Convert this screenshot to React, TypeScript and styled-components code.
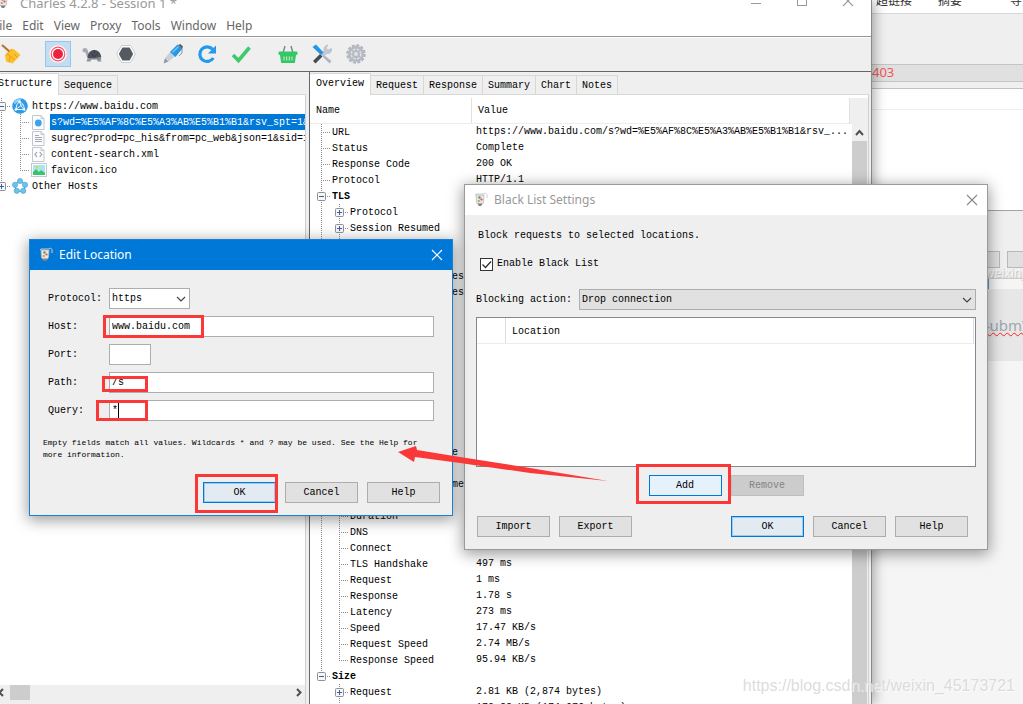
import React from "react";
import styled, { createGlobalStyle, css } from "styled-components";

const mono = `"Liberation Mono", "Noto Sans CJK SC", monospace`;
const ui = `"Noto Sans", "Noto Sans CJK SC", sans-serif`;

const GlobalStyle = createGlobalStyle`
  * { box-sizing: border-box; }
  body { margin: 0; background: #f5f5f5; font: 10px/16px ${mono}; color: #000; }
  button, input, select { font: inherit; color: inherit; margin: 0; border-radius: 0; }
  ul { list-style: none; margin: 0; padding: 0; }
`;

const Desktop = styled.div`
  position: relative;
  display: flex;
  height: 100vh;
  overflow: hidden;
`;

/* ---------- Charles main window ---------- */

const MainWindow = styled.main`
  position: relative;
  z-index: 1;
  flex: 1;
  min-width: 0;
  display: flex;
  flex-direction: column;
  background: #efefef;
  border-right: 1px solid #8a8a8a;
  box-shadow: 2px 0 12px rgba(0, 0, 0, 0.35);
`;

const TitleBar = styled.header`
  height: 14px;
  display: flex;
  align-items: flex-end;
  gap: 8px;
  background: #fff;
  color: #999;
  font: 13px/22px ${ui};
  overflow: hidden;
  > svg { flex: none; margin: 0 0 4px -4px; }
`;

const TitleText = styled.span`
  flex: 1;
`;

const WindowButtons = styled.div`
  display: flex;
  gap: 34px;
  padding: 0 17px 7px 0;
  svg { display: block; }
`;

const MenuBar = styled.nav`
  height: 23px;
  display: flex;
  gap: 10px;
  background: #fff;
  border-bottom: 1px solid #979797;
`;

const MenuItem = styled.button`
  padding: 2px 0 0;
  border: 0;
  background: none;
  color: #666;
  font: 12px/20px ${ui};
  &:first-child { margin-left: -7px; }
`;

const Toolbar = styled.div`
  height: 35px;
  display: flex;
  align-items: center;
  gap: 21px;
  padding-bottom: 2px;
  border-top: 1px solid #fff;
  border-bottom: 1px solid #666;
`;

const ToolGroup = styled.div`
  display: flex;
  gap: 8px;
  &:first-child { margin-left: -2px; }
`;

const ToolButton = styled.button<{ $active?: boolean }>`
  width: 26px;
  height: 26px;
  padding: 0;
  display: grid;
  place-items: center;
  border: 1px solid ${(p) => (p.$active ? "#90c8f0" : "transparent")};
  background: ${(p) => (p.$active ? "#c4dcf0" : "transparent")};
  svg { display: block; }
`;

const Panes = styled.div`
  flex: 1;
  min-height: 0;
  display: flex;
`;

const StructurePane = styled.section`
  width: 310px;
  flex: none;
  display: flex;
  flex-direction: column;
  padding: 1px 3px 0 0;
  border-right: 1px solid #666;
`;

const DetailPane = styled.section`
  flex: 1;
  min-width: 0;
  display: flex;
  flex-direction: column;
  padding: 1px 2px 0 0;
`;

const TabList = styled.div`
  display: flex;
  align-items: flex-end;
  height: 22px;
  border-bottom: 1px solid #d8d8d8;
`;

const Tab = styled.button<{ $selected?: boolean }>`
  height: 19px;
  padding: 0 5px;
  border: 1px solid #d8d8d8;
  border-width: 1px 1px 0 0;
  background: #efefef;
  line-height: 20px;
  ${(p) =>
    p.$selected &&
    css`
      height: 22px;
      padding: 0 6px 2px;
      margin-bottom: -1px;
      background: #fff;
    `}
`;

const CutTab = styled(Tab)`
  margin-left: -2px;
  padding-left: 0;
`;

const TreeArea = styled.div`
  flex: 1;
  min-height: 0;
  display: flex;
  flex-direction: column;
  background: #fff;
  border-right: 1px solid #d0d0d0;
`;

const HostTree = styled.ul`
  flex: 1;
  padding-top: 3px;
  overflow: hidden;
`;

const HostRow = styled.li`
  display: flex;
  height: 16px;
  margin-left: -4px;
  white-space: nowrap;
  svg { flex: none; }
`;

const HostLabel = styled.span<{ $selected?: boolean }>`
  flex: 1;
  padding: 0 1px;
  margin-left: 3px;
  overflow: hidden;
  line-height: 17px;
  ${(p) => p.$selected && "background: #0078d7; color: #fff;"}
`;

const HScroll = styled.div`
  height: 19px;
  display: flex;
  align-items: flex-start;
  background: #efefef;
  svg { margin-top: 3px; }
`;

const HThumb = styled.div`
  width: 20px;
  height: 15px;
  margin: 0 auto 0 6px;
  background: #cdcdcd;
`;

const dots = (dir: string) =>
  `repeating-linear-gradient(${dir}, #8c8c8c 0 1px, transparent 1px 2px)`;

/* One indentation step of a tree, drawn with dotted connectors */
const Guide = styled.span<{ $w?: number; $line?: "full" | "half" | "none"; $branch?: boolean }>`
  flex: none;
  width: ${(p) => p.$w ?? 16}px;
  height: 16px;
  display: block;
  padding: 4px 0 0 1px;
  background-repeat: no-repeat;
  background-image: ${dots("to bottom")}, ${dots("to right")};
  background-position: 5px 0, 5px 8px;
  background-size:
    ${(p) => (!p.$line || p.$line === "none" ? "0 0" : p.$line === "half" ? "1px 9px" : "1px 16px")},
    ${(p) => (p.$branch ? "calc(100% - 6px) 1px" : "0 0")};
  svg { display: block; }
`;

const DetailBody = styled.div`
  flex: 1;
  min-height: 0;
  display: flex;
  padding-top: 3px;
  background: #fff;
  border-right: 1px solid #d0d0d0;
  overflow: hidden;
`;

const DetailTable = styled.table`
  flex: 1;
  display: block;
  border-collapse: collapse;
  thead, tbody { display: block; }
  tr { display: flex; }
  thead tr { height: 26px; border-bottom: 1px solid #ececec; }
  th { font-weight: 400; text-align: left; padding: 0 0 0 6px; line-height: 26px; }
  td { padding: 0; height: 16px; white-space: nowrap; }
`;

const NameHead = styled.th`
  width: 162px;
  border-right: 1px solid #e0e0e0;
`;

const NameCell = styled.td<{ $bold?: boolean }>`
  width: 166px;
  flex: none;
  display: flex;
  line-height: 17px;
  font-weight: ${(p) => (p.$bold ? 700 : 400)};
  &::before { content: ""; width: 6px; flex: none; }
`;

const ValueCell = styled.td`
  line-height: 15px;
`;

const VScroll = styled.div`
  width: 19px;
  flex: none;
  display: flex;
  flex-direction: column;
  align-items: flex-end;
`;

const ScrollCorner = styled.div`
  width: 19px;
  height: 26px;
  background: #efefef;
  border-left: 1px solid #e0e0e0;
`;

const VTrack = styled.div`
  flex: 1;
  width: 16px;
  display: flex;
  flex-direction: column;
  background: #efefef;
  padding-right: 1px;
  svg { display: block; margin: 4px 3px; }
`;

const VThumb = styled.div`
  flex: 1;
  background: #cdcdcd;
`;

/* ---------- Window behind, on the right ---------- */

const BackWindow = styled.aside`
  width: 151px;
  flex: none;
  display: flex;
  flex-direction: column;
  background: #f5f5f5;
  overflow: hidden;
`;

const BackTabs = styled.div`
  height: 14px;
  flex: none;
  display: flex;
  align-items: flex-end;
  gap: 26px;
  padding-left: 4px;
  background: #fff;
  border-bottom: 1px solid #d8d8d8;
  font: 12px/18px "Noto Sans CJK SC", sans-serif;
  color: #333;
  white-space: nowrap;
  span { margin-bottom: 4px; }
  span:last-child { margin-left: 22px; }
`;

const BackGap = styled.div<{ $h: number; $bg: string; $line?: string }>`
  height: ${(p) => p.$h}px;
  flex: none;
  background: ${(p) => p.$bg};
  border-bottom: 1px solid ${(p) => p.$line ?? p.$bg};
`;

const CodeBar = styled.div`
  height: 18px;
  flex: none;
  background: #e0e0e0;
  border: 1px solid #c4c4c4;
  border-width: 1px 0;
  color: #f25555;
  font: 13px/14px ${ui};
`;

const BackForm = styled.div`
  height: 68px;
  flex: none;
  display: flex;
  flex-direction: column;
  justify-content: flex-end;
  background: #efefef;
  border-bottom: 1px solid #ccc;
  color: #f4f4f4;
  font: 13px/10px "Liberation Sans", sans-serif;
  text-shadow: 1px 1px 1px #bbb;
  padding-left: 113px;
`;

const BackButtons = styled.div`
  display: flex;
  gap: 7px;
  i { width: 15px; height: 17px; border: 1px solid #b8b8b8; background: #e0e0e0; }
  i:last-child { flex: 1; border-right: 0; }
`;

const BackStrip = styled.div`
  height: 10px;
  flex: none;
  margin-left: 115px;
  border-left: 2px solid #4f9be0;
`;

const Captcha = styled.div`
  height: 72px;
  flex: none;
  padding: 24px 0 0 109px;
  background: #e7e7e7;
  color: #a0a6b0;
  font: 15px/24px ${ui};
  text-decoration: underline wavy #f22 1px;
  white-space: nowrap;
`;

/* ---------- Dialogs ---------- */

const Dialog = styled.section<{ $x: number; $y: number; $w: number; $border: string }>`
  position: absolute;
  z-index: 2;
  left: ${(p) => p.$x}px;
  top: ${(p) => p.$y}px;
  width: ${(p) => p.$w}px;
  background: #efefef;
  border: 1px solid ${(p) => p.$border};
  box-shadow: 0 3px 14px 1px rgba(0, 0, 0, 0.4);
`;

const DialogTitle = styled.header<{ $active?: boolean }>`
  height: 30px;
  display: flex;
  align-items: center;
  gap: 5px;
  padding: 0 9px 0 8px;
  font: 12px/20px ${ui};
  background: ${(p) => (p.$active ? "#0078d7" : "#fff")};
  color: ${(p) => (p.$active ? "#fff" : "#999")};
  span { flex: 1; }
`;

const CloseButton = styled.button`
  padding: 0;
  border: 0;
  background: none;
  svg { display: block; }
`;

const PushButton = styled.button<{ $look?: "default" | "hover" }>`
  width: 73px;
  height: 21px;
  padding: 0;
  background: #e1e1e1;
  border: 1px solid #adadad;
  line-height: 19px;
  ${(p) => p.$look === "default" && "background: #e2eaf2; border-color: #0078d7; box-shadow: inset 0 0 0 1px #9ccbf0;"}
  ${(p) => p.$look === "hover" && "background: #e5f1fb; border-color: #0078d7;"}
  &:disabled { background: #ccc; border-color: #bfbfbf; color: #838383; }
`;

const ButtonRow = styled.div<{ $justify?: string }>`
  display: flex;
  gap: 9px;
  justify-content: ${(p) => p.$justify ?? "flex-start"};
`;

const FooterRow = styled(ButtonRow)`
  padding: 20px 8px 0 1px;
`;

const Spacer = styled.div`
  flex: 1;
`;

const LocationForm = styled.form`
  padding: 18px 12px 12px 13px;
`;

const Fields = styled.div`
  display: grid;
  grid-template-columns: 57px 1fr;
  row-gap: 7px;
  padding: 0 6px 0 5px;
  label { line-height: 21px; }
`;

const TextBox = styled.input`
  width: ${(p) => (p.size === 5 ? "42px" : "100%")};
  height: 21px;
  padding: 0 2px;
  border: 1px solid #abadb3;
  background: #fff;
  display: block;
  outline: none;
`;

const FieldBox = styled.div`
  position: relative;
  margin-left: 4px;
`;

const Caret = styled.i`
  position: absolute;
  left: 9px;
  top: 3px;
  width: 1px;
  height: 15px;
  background: #000;
`;

const SelectBox = styled.div<{ $w?: string; $gray?: boolean }>`
  position: relative;
  width: ${(p) => p.$w ?? "auto"};
  flex: 1;
  select {
    appearance: none;
    width: 100%;
    height: 21px;
    padding: 0 2px;
    display: block;
    border: 1px solid #adadad;
    background: ${(p) => (p.$gray ? "#e1e1e1" : "#fff")};
    outline: none;
  }
  svg { position: absolute; right: 4px; top: 7px; pointer-events: none; }
`;

const Hint = styled.p`
  margin: 16px 0 21px;
  font-size: 8px;
  line-height: 12px;
`;

const OptionForm = styled.form`
  padding: 13px 11px 12px;
  p { margin: 0 0 12px 2px; }
`;

const CheckRow = styled.label`
  display: flex;
  align-items: center;
  gap: 4px;
  height: 16px;
  margin: 0 0 17px 4px;
  input {
    appearance: none;
    width: 13px;
    height: 13px;
    border: 1px solid #333;
    background: #fff;
  }
  svg { position: absolute; pointer-events: none; margin-left: 1px; }
`;

const ActionRow = styled.div`
  display: flex;
  align-items: center;
  gap: 7px;
  label { line-height: 21px; }
`;

const LocationTable = styled.table`
  width: 100%;
  height: 150px;
  display: block;
  margin: 7px 0 8px;
  background: #fff;
  border: 1px solid #828790;
  border-collapse: collapse;
  thead { display: block; }
  tr { display: flex; height: 26px; border-bottom: 1px solid #ececec; padding-right: 1px; }
  th { padding: 0; font-weight: 400; line-height: 28px; text-align: left; border-right: 1px solid #dcdcdc; }
  th:first-child { width: 29px; }
  th:last-child { flex: 1; padding-left: 6px; }
`;

/* ---------- Markup over the windows ---------- */

const Mark = styled.div<{ $x: number; $y: number; $w: number; $h: number }>`
  position: absolute;
  z-index: 3;
  left: ${(p) => p.$x}px;
  top: ${(p) => p.$y}px;
  width: ${(p) => p.$w}px;
  height: ${(p) => p.$h}px;
  border: 3px solid #fb3838;
  pointer-events: none;
`;

const Arrow = styled.svg`
  position: absolute;
  z-index: 3;
  left: 396px;
  top: 440px;
  pointer-events: none;
`;

const Watermark = styled.div`
  position: absolute;
  z-index: 3;
  right: 8px;
  bottom: 8px;
  color: rgba(216, 216, 216, 0.9);
  font: 16px/20px "Liberation Sans", sans-serif;
  text-shadow: 1px 1px 0 rgba(255, 255, 255, 0.7);
`;

/* ---------- Icons ---------- */

const JugIcon = () => (
  <svg width="16" height="16" viewBox="0 0 16 16">
    <path d="M2 3l1-1h8l1.500-1L14 2.500V6" fill="none" stroke="#cfcfcf" strokeWidth="1" />
    <path d="M3 3h8l-.5 7.500L8.500 13h-3L3.500 10.500z" fill="#e6e6e2" stroke="#b4b4b0" strokeWidth=".7" />
    <path d="M4.500 11.500h5L8 14H6z" fill="#808080" />
    <circle cx="6.500" cy="5.500" r="1.200" fill="#4fa05a" />
    <circle cx="8.500" cy="7.500" r="1.100" fill="#d8506a" />
    <circle cx="5.800" cy="9" r="1.100" fill="#e08a5a" />
  </svg>
);

const CloseIcon = ({ color }: { color: string }) => (
  <svg width="12" height="12" viewBox="0 0 12 12">
    <path d="M1 1l10 10M11 1L1 11" stroke={color} strokeWidth="1.100" />
  </svg>
);

const Chevron = () => (
  <svg width="10" height="8" viewBox="0 0 10 8">
    <path d="M1 2l4 4 4-4" fill="none" stroke="#444" strokeWidth="1.200" />
  </svg>
);

const Toggle = ({ open }: { open: boolean }) => (
  <svg width="9" height="9" viewBox="0 0 9 9">
    <rect x=".5" y=".5" width="8" height="8" rx="1" fill="#f6f6f6" stroke="#8f8f8f" />
    <path d={open ? "M2 4.500h5" : "M2 4.500h5M4.500 2v5"} stroke="#3a5fb0" />
  </svg>
);

const ScrollArrow = ({ d }: { d: string }) => (
  <svg width="9" height="9" viewBox="0 0 9 9">
    <path d={d} fill="none" stroke="#505050" strokeWidth="2" />
  </svg>
);

const GlobeIcon = () => (
  <svg width="16" height="16" viewBox="0 0 16 16">
    <circle cx="8" cy="8" r="7.800" fill="#2f9be6" />
    <path d="M1.500 5A7.500 7.500 0 0 1 10 .8L6 4 3 6z" fill="#8fd0f7" />
    <path d="M7.500 3.500Q4 6 3.800 11.500h8.400Q12.500 6 7.500 3.500M7.500 3.500Q8 8 12.200 11.500M3.800 11.500L11 6" fill="none" stroke="#e6f5ff" strokeWidth="1" />
    <g fill="#fff"><circle cx="7.500" cy="3.500" r="1.200" /><circle cx="3.800" cy="11.500" r="1.200" /><circle cx="12.200" cy="11.500" r="1.200" /></g>
  </svg>
);

const HostsIcon = () => (
  <svg width="16" height="16" viewBox="0 0 16 16">
    <circle cx="8" cy="8.500" r="4.800" fill="none" stroke="#8a98a4" strokeWidth="1.200" />
    <g fill="#6cc4ee" stroke="#3d9fd2" strokeWidth=".6">
      <circle cx="8" cy="3" r="2.600" /><circle cx="13" cy="6.800" r="2.600" />
      <circle cx="11.200" cy="12.800" r="2.600" /><circle cx="4.800" cy="12.800" r="2.600" />
      <circle cx="3" cy="6.800" r="2.600" />
    </g>
  </svg>
);

const FileIcon = ({ kind }: { kind: string }) => (
  <svg width="16" height="16" viewBox="0 0 16 16">
    {kind === "image" ? (
      <>
        <rect x=".5" y="1.500" width="15" height="13" fill="#fff" stroke="#c2c8d0" />
        <rect x="2" y="3" width="12" height="10" fill="#a6e6f0" />
        <path d="M2 13V10l3-3 3 3 2-2 4 3v2z" fill="#3cc267" />
        <circle cx="6" cy="5" r="1.300" fill="#ffc73a" />
      </>
    ) : (
      <>
        <path d="M1.500 1.500h8.500l3 3v11h-11.500z" fill="#fcfcfe" stroke="#c2c6d2" />
        <path d="M10 1.500v3h3" fill="none" stroke="#c2c6d2" />
        {kind === "dot" && <circle cx="7.300" cy="9" r="3.400" fill="#3ba4e8" />}
        {kind === "text" && <path d="M4 5.500h4M4 7.500h7M4 9.500h7M4 11.500h7" stroke="#a4a8b4" />}
        {kind === "code" && <path d="M6 6L4 8.500l2 2.500M8.700 6l2 2.500-2 2.500" fill="none" stroke="#9a9faa" strokeWidth="1.200" />}
      </>
    )}
  </svg>
);

const toolIcons: Record<string, React.ReactNode> = {
  Clear: (
    <>
      <path d="M1 1l8 7" stroke="#b5752a" strokeWidth="2.200" />
      <path d="M11 4.500l3 1.500 5.500 5-8 8.500L5 17.500 4 11.500z" fill="#fcc02e" />
      <path d="M5.500 9l8 7M10.500 5l-6 6.500M9 12l-1 6M13 10l3.500 3.500" stroke="#e39a16" strokeWidth=".9" />
    </>
  ),
  Record: (
    <>
      <circle cx="10" cy="10" r="9" fill="#fff" stroke="#e4dce0" />
      <circle cx="10" cy="10" r="6.800" fill="#fff" stroke="#ee5570" strokeWidth="1.200" />
      <circle cx="10" cy="10" r="5" fill="#f0203f" />
    </>
  ),
  Throttle: (
    <>
      <path d="M.5 6.500Q.5 4 3 4q2.500 0 2.800 2.500L7 10l2 1v3.500L5 13 3.500 8.500 1 8z" fill="#a3a8b2" />
      <path d="M5.500 14.500c0-6 3.500-8.500 7-8.500s6.500 3 6.800 7.500z" fill="#4c5058" />
      <path d="M7 14h12v1.500H7z" fill="#7d828b" />
      <path d="M5.500 14.500h4l-1 3h-4zM15 15h3.500l1 2.500h-4z" fill="#8f949d" />
      <path d="M9 9l3.500 4L16 9M12.500 6v3.500" fill="none" stroke="#33363c" strokeWidth=".8" />
    </>
  ),
  Breakpoints: (
    <>
      <path d="M5.500 1.500h9L19.400 10l-4.900 8.500h-9L.6 10z" fill="#fff" stroke="#c8ccd2" />
      <path d="M6.400 3.600h7.200L17.200 10l-3.600 6.400H6.400L2.800 10z" fill="#555a62" />
    </>
  ),
  Compose: (
    <>
      <path d="M.5 19.500L2 14l3.500 3.500z" fill="#8f97a4" />
      <path d="M2 14l5.500-6.500 5 4.500-7 5.500z" fill="#c9cfda" />
      <path d="M7 8l7.500-7.500 4.500 4.500-6.500 8z" fill="#2299e4" />
      <path d="M9.500 8.500l6-6" stroke="#7cc8f5" strokeWidth="1.200" />
      <path d="M15 1l2.500-1 2.500 2.500-1 3z" fill="#5d6572" />
      <path d="M19 5v4l-3 3" fill="none" stroke="#8a929f" strokeWidth="1" />
    </>
  ),
  Repeat: (
    <>
      <path d="M15.500 5.200A7.300 7.300 0 1 0 16.300 14" fill="none" stroke="#2299ec" strokeWidth="3.200" />
      <path d="M19 1.500V9.500h-8z" fill="#2299ec" />
    </>
  ),
  Validate: <path d="M2 11l5.500 5.500L18.500 3.500" fill="none" stroke="#3fca6d" strokeWidth="3.600" />,
  Purchase: (
    <>
      <path d="M5 9L7 2M15 9l-2-7" stroke="#7b838d" strokeWidth="1.400" />
      <rect x=".5" y="7.500" width="19" height="3.500" rx="1" fill="#37c665" />
      <path d="M2 11h16l-1.200 8H3.200z" fill="#37c665" />
      <path d="M6 12.500v4M8.700 12.500v4M11.300 12.500v4M14 12.500v4" stroke="#c5f3d2" strokeWidth="1" />
    </>
  ),
  Tools: (
    <>
      <path d="M16 1l-2 3 2 2 3.500-1.500c.5 4-2 5.500-5 5l-3 3-2.500-2.500 3-3C11.500 3.500 13.500 1 16 1z" fill="#c3c9d2" stroke="#a5acb8" strokeWidth=".5" />
      <path d="M1 17l7-7 2.500 2.500-7 7z" fill="#454b55" />
      <path d="M.5 3L4 .5l7.500 8-2.500 2.500z" fill="#2196e8" />
      <path d="M12 11l7.500 6-2 2.500-7-7z" fill="#aeb6c2" />
    </>
  ),
  Settings: (
    <>
      <circle cx="10" cy="10" r="8.700" fill="none" stroke="#adb3bd" strokeWidth="2" strokeDasharray="3 1.555" />
      <circle cx="10" cy="10" r="8" fill="#b4b9c2" />
      <circle cx="10" cy="10" r="4.800" fill="none" stroke="#dfe2e7" strokeWidth="1.600" strokeDasharray="2.500 1.270" />
      <circle cx="10" cy="10" r="2" fill="#dfe2e7" />
    </>
  ),
};

const toolGroups = [
  ["Clear"],
  ["Record", "Throttle", "Breakpoints"],
  ["Compose", "Repeat", "Validate"],
  ["Purchase", "Tools", "Settings"],
];

/* ---------- Data ---------- */

type Item = { name: string; value?: string; level: 0 | 1; open?: boolean; last?: boolean };

const items: Item[] = [
  { name: "URL", value: "https://www.baidu.com/s?wd=%E5%AF%8C%E5%A3%AB%E5%B1%B1&rsv_...", level: 0 },
  { name: "Status", value: "Complete", level: 0 },
  { name: "Response Code", value: "200 OK", level: 0 },
  { name: "Protocol", value: "HTTP/1.1", level: 0 },
  { name: "TLS", level: 0, open: true },
  { name: "Protocol", level: 1, open: false },
  { name: "Session Resumed", level: 1, open: false },
  { name: "Cipher Suite", level: 1, open: false },
  { name: "ALPN", level: 1, open: false },
  { name: "Client Certificates", level: 1 },
  { name: "Server Certificates", level: 1, open: false },
  { name: "Extensions", level: 1, open: false, last: true },
  { name: "Method", value: "GET", level: 0 },
  { name: "Kept Alive", value: "No", level: 0 },
  { name: "Content-Type", level: 0 },
  { name: "Client Address", level: 0 },
  { name: "Remote Address", level: 0 },
  { name: "Tags", level: 0 },
  { name: "Connection", level: 0, open: false },
  { name: "Timing", level: 0, open: true },
  { name: "Request Start Time", level: 1 },
  { name: "Request End Time", level: 1 },
  { name: "Response Start Time", level: 1 },
  { name: "Response End Time", level: 1 },
  { name: "Duration", level: 1 },
  { name: "DNS", level: 1 },
  { name: "Connect", value: "3.99 s", level: 1 },
  { name: "TLS Handshake", value: "497 ms", level: 1 },
  { name: "Request", value: "1 ms", level: 1 },
  { name: "Response", value: "1.78 s", level: 1 },
  { name: "Latency", value: "273 ms", level: 1 },
  { name: "Speed", value: "17.47 KB/s", level: 1 },
  { name: "Request Speed", value: "2.74 MB/s", level: 1 },
  { name: "Response Speed", value: "95.94 KB/s", level: 1, last: true },
  { name: "Size", level: 0, open: true, last: true },
  { name: "Request", value: "2.81 KB (2,874 bytes)", level: 1, open: false },
  { name: "Response", value: "170.22 KB (174,076 bytes)", level: 1, open: false },
];

const files = [
  { kind: "dot", name: "s?wd=%E5%AF%8C%E5%A3%AB%E5%B1%B1&rsv_spt=1&rsv_iqid=", selected: true },
  { kind: "text", name: "sugrec?prod=pc_his&from=pc_web&json=1&sid=1428" },
  { kind: "code", name: "content-search.xml" },
  { kind: "image", name: "favicon.ico" },
];

export default function App() {
  return (
    <Desktop>
      <GlobalStyle />
      <MainWindow>
        <TitleBar>
          <JugIcon />
          <TitleText>Charles 4.2.8 - Session 1 *</TitleText>
          <WindowButtons>
            <svg width="12" height="12"><path d="M1 8.500h10" stroke="#999" /></svg>
            <svg width="12" height="12"><rect x="1.500" y="1.500" width="9" height="9" fill="none" stroke="#999" /></svg>
            <CloseIcon color="#999" />
          </WindowButtons>
        </TitleBar>
        <MenuBar>
          {["File", "Edit", "View", "Proxy", "Tools", "Window", "Help"].map((m) => (
            <MenuItem key={m}>{m}</MenuItem>
          ))}
        </MenuBar>
        <Toolbar>
          {toolGroups.map((group) => (
            <ToolGroup key={group[0]}>
              {group.map((name) => (
                <ToolButton key={name} aria-label={name} $active={name === "Record"}>
                  <svg width="20" height="20" viewBox="0 0 20 20">{toolIcons[name]}</svg>
                </ToolButton>
              ))}
            </ToolGroup>
          ))}
        </Toolbar>
        <Panes>
          <StructurePane>
            <TabList>
              <CutTab $selected>Structure</CutTab>
              <Tab>Sequence</Tab>
            </TabList>
            <TreeArea>
              <HostTree>
                <HostRow>
                  <Guide $line="full" $branch><Toggle open /></Guide>
                  <GlobeIcon />
                  <HostLabel>https://www.baidu.com</HostLabel>
                </HostRow>
                {files.map((f, i) => (
                  <HostRow key={f.name}>
                    <Guide $w={19} $line="full" />
                    <Guide $line={i === files.length - 1 ? "half" : "full"} $branch />
                    <FileIcon kind={f.kind} />
                    <HostLabel $selected={f.selected}>{f.name}</HostLabel>
                  </HostRow>
                ))}
                <HostRow>
                  <Guide $line="half" $branch><Toggle open={false} /></Guide>
                  <HostsIcon />
                  <HostLabel>Other Hosts</HostLabel>
                </HostRow>
              </HostTree>
              <HScroll>
                <svg width="4" height="9" viewBox="5 0 4 9"><path d="M8 1L4.500 4.500 8 8" fill="none" stroke="#505050" strokeWidth="2" /></svg>
                <HThumb />
                <ScrollArrow d="M1 1l3.500 3.500L1 8" />
              </HScroll>
            </TreeArea>
          </StructurePane>
          <DetailPane>
            <TabList>
              {["Overview", "Request", "Response", "Summary", "Chart", "Notes"].map((t, i) => (
                <Tab key={t} $selected={i === 0}>{t}</Tab>
              ))}
            </TabList>
            <DetailBody>
              <DetailTable>
                <thead>
                  <tr>
                    <NameHead>Name</NameHead>
                    <th>Value</th>
                  </tr>
                </thead>
                <tbody>
                  {items.map((it, i) => {
                    const mark = it.open === undefined ? null : <Toggle open={it.open} />;
                    return (
                      <tr key={i}>
                        <NameCell $bold={it.open === true}>
                          {it.level === 1 && <Guide $w={18} $line={i > 34 ? "none" : "full"} />}
                          <Guide $line={it.last ? "half" : "full"} $branch>{mark}</Guide>
                          {it.name}
                        </NameCell>
                        <ValueCell>{it.value}</ValueCell>
                      </tr>
                    );
                  })}
                </tbody>
              </DetailTable>
              <VScroll>
                <ScrollCorner />
                <VTrack>
                  <ScrollArrow d="M1 7l3.500-4L8 7" />
                  <VThumb />
                </VTrack>
              </VScroll>
            </DetailBody>
          </DetailPane>
        </Panes>
      </MainWindow>

      <BackWindow>
        <BackTabs><span>超链接</span><span>摘要</span><span>导入</span></BackTabs>
        <BackGap $h={50} $bg="#efefef" />
        <CodeBar>403</CodeBar>
        <BackGap $h={7} $bg="#efefef" $line="#c0c0c8" />
        <BackGap $h={21} $bg="#fff" $line="#efefef" />
        <BackGap $h={101} $bg="#fff" $line="#a0a4aa" />
        <BackForm>
          <BackButtons><i /><i /></BackButtons>
          weixin_45
        </BackForm>
        <BackStrip />
        <Captcha>4ubmV</Captcha>
      </BackWindow>

      <Dialog $x={464} $y={184} $w={524} $border="#9a9a9a" aria-label="Black List Settings">
        <DialogTitle>
          <JugIcon />
          <span>Black List Settings</span>
          <CloseButton aria-label="Close"><CloseIcon color="#888" /></CloseButton>
        </DialogTitle>
        <OptionForm onSubmit={(e) => e.preventDefault()}>
          <p>Block requests to selected locations.</p>
          <CheckRow>
            <input type="checkbox" defaultChecked />
            <svg width="11" height="11" viewBox="0 0 11 11"><path d="M1.500 5.500L4.500 8.500 10 2.500" fill="none" stroke="#333" strokeWidth="1.400" /></svg>
            Enable Black List
          </CheckRow>
          <ActionRow>
            <label htmlFor="action">Blocking action:</label>
            <SelectBox $gray>
              <select id="action"><option>Drop connection</option></select>
              <Chevron />
            </SelectBox>
          </ActionRow>
          <LocationTable>
            <thead><tr><th></th><th>Location</th></tr></thead>
          </LocationTable>
          <ButtonRow $justify="center">
            <PushButton $look="hover">Add</PushButton>
            <PushButton disabled>Remove</PushButton>
          </ButtonRow>
          <FooterRow>
            <PushButton>Import</PushButton>
            <PushButton>Export</PushButton>
            <Spacer />
            <PushButton $look="default">OK</PushButton>
            <PushButton>Cancel</PushButton>
            <PushButton>Help</PushButton>
          </FooterRow>
        </OptionForm>
      </Dialog>

      <Dialog $x={29} $y={239} $w={424} $border="#1a80d6" aria-label="Edit Location">
        <DialogTitle $active>
          <JugIcon />
          <span>Edit Location</span>
          <CloseButton aria-label="Close"><CloseIcon color="#fff" /></CloseButton>
        </DialogTitle>
        <LocationForm onSubmit={(e) => e.preventDefault()}>
          <Fields>
            <label htmlFor="protocol">Protocol:</label>
            <FieldBox>
              <SelectBox $w="81px">
                <select id="protocol"><option>https</option></select>
                <Chevron />
              </SelectBox>
            </FieldBox>
            <label htmlFor="host">Host:</label>
            <FieldBox><TextBox id="host" defaultValue="www.baidu.com" /></FieldBox>
            <label htmlFor="port">Port:</label>
            <FieldBox><TextBox id="port" size={5} /></FieldBox>
            <label htmlFor="path">Path:</label>
            <FieldBox><TextBox id="path" defaultValue="/s" /></FieldBox>
            <label htmlFor="query">Query:</label>
            <FieldBox><TextBox id="query" defaultValue="*" /><Caret /></FieldBox>
          </Fields>
          <Hint>
            Empty fields match all values. Wildcards * and ? may be used. See the Help for
            <br />
            more information.
          </Hint>
          <ButtonRow $justify="flex-end">
            <PushButton $look="default">OK</PushButton>
            <PushButton>Cancel</PushButton>
            <PushButton>Help</PushButton>
          </ButtonRow>
        </LocationForm>
      </Dialog>

      <Mark $x={103} $y={315} $w={101} $h={23} />
      <Mark $x={102} $y={376} $w={46} $h={16} />
      <Mark $x={96} $y={400} $w={52} $h={21} />
      <Mark $x={195} $y={474} $w={83} $h={39} />
      <Mark $x={636} $y={464} $w={95} $h={40} />
      <Arrow width="214" height="46" viewBox="396 440 214 46">
        <path d="M398 452L416 446 417 450 460 457 530 468 608 481 530 473 460 463 415 457 414 462z" fill="#fb3838" />
      </Arrow>
      <Watermark>https://blog.csdn.net/weixin_45173721</Watermark>
    </Desktop>
  );
}
